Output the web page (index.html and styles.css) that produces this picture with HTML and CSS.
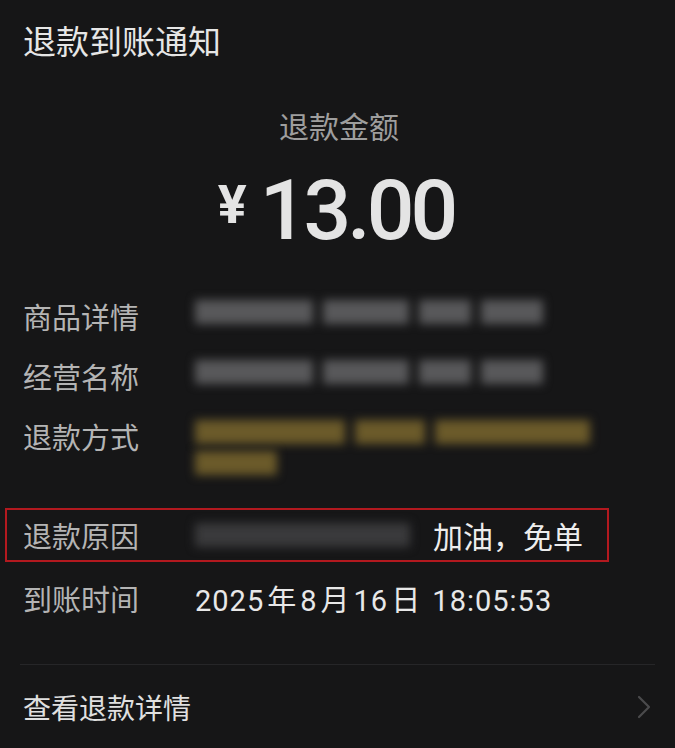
FILE: index.html
```html
<!DOCTYPE html>
<html lang="zh-CN">
<head>
  <meta charset="UTF-8" />
  <meta name="viewport" content="width=device-width, initial-scale=1.0"/>
  <title>退款到账通知</title>
  <link rel="stylesheet" href="styles.css">
</head>
<body>
  <div class="notice">
    <div class="title">退款到账通知</div>

    <div class="amount-label">退款金额</div>
    <div class="amount"><span class="currency">¥</span>13.00</div>

    <div class="rows">
      <div class="row">
        <div class="label">商品详情</div>
        <div class="value">
          <div class="blur-line">
            <span class="chunk" style="width: 118px"></span>
            <span class="chunk" style="width: 86px"></span>
            <span class="chunk" style="width: 52px"></span>
            <span class="chunk" style="width: 62px"></span>
          </div>
        </div>
      </div>

      <div class="row">
        <div class="label">经营名称</div>
        <div class="value">
          <div class="blur-line">
            <span class="chunk" style="width: 118px"></span>
            <span class="chunk" style="width: 86px"></span>
            <span class="chunk" style="width: 52px"></span>
            <span class="chunk" style="width: 62px"></span>
          </div>
        </div>
      </div>

      <div class="row row-tall">
        <div class="label">退款方式</div>
        <div class="value">
          <div class="blur-line gold">
            <span class="chunk" style="width: 150px"></span>
            <span class="chunk" style="width: 70px"></span>
            <span class="chunk" style="width: 155px"></span>
          </div>
          <div class="blur-line gold">
            <span class="chunk" style="width: 82px"></span>
          </div>
        </div>
      </div>

      <div class="row reason">
        <div class="label">退款原因</div>
        <div class="value reason-value">
          <div class="blur-line dim">
            <span class="chunk" style="width: 215px"></span>
          </div>
          <span class="reason-text">加油，免单</span>
        </div>
      </div>

      <div class="row">
        <div class="label">到账时间</div>
        <div class="value time">2025<span class="unit">年</span>8<span class="unit">月</span>16<span class="unit">日</span> 18:05:53</div>
      </div>
    </div>

    <div class="footer">
      <span>查看退款详情</span>
      <svg class="chevron" width="14" height="24" viewBox="0 0 14 24">
        <path d="M2 2 L12 12 L2 22" fill="none" stroke="#4a4a4c" stroke-width="2.2" stroke-linecap="round" stroke-linejoin="round"/>
      </svg>
    </div>
  </div>
</body>
</html>
```

FILE: styles.css
```css
body {
  margin: 0;
  background: #161617;
  color: #d8d8d8;
  font-family: "Noto Sans CJK SC", "Noto Sans", sans-serif;
}

.notice {
  padding: 20px 20px 0 23px;
}

.title {
  font-size: 33px;
  line-height: 40px;
  color: #e6e6e6;
}

.amount-label {
  margin-top: 45px;
  text-align: center;
  font-size: 30px;
  line-height: 40px;
  color: #9e9e9e;
}

.amount {
  margin-top: 15px;
  text-align: center;
  font-family: Roboto, "Noto Sans", sans-serif;
  font-size: 84px;
  line-height: 90px;
  font-weight: 500;
  letter-spacing: -4px;
  color: #e4e4e4;
  padding-right: 6px;
}

.currency {
  font-size: 54px;
  font-weight: 700;
  letter-spacing: 0;
  vertical-align: 16px;
  margin-right: 13px;
}

.rows {
  margin-top: 40px;
}

.row {
  display: flex;
  align-items: flex-start;
  min-height: 60px;
}

.row-tall {
  min-height: 74px;
}

.label {
  width: 172px;
  flex-shrink: 0;
  font-size: 29px;
  line-height: 40px;
  color: #b4b4b4;
}

.value {
  font-size: 29px;
  line-height: 40px;
  color: #e8e8e8;
}

.blur-line {
  display: flex;
  gap: 10px;
  height: 32px;
  align-items: center;
  filter: blur(5px);
}

.chunk {
  display: block;
  height: 24px;
  background: #58585a;
}

.gold .chunk {
  background: #6b5a2a;
}

.gold + .gold {
  height: 30px;
}

.dim .chunk {
  background: #3a3a3c;
}

.reason {
  margin: 18px 46px 16px -18px;
  padding: 5px 0 5px 16px;
  min-height: 0;
  border: 2px solid #b3191f;
  align-items: center;
}

.reason-value {
  display: flex;
  align-items: center;
  justify-content: space-between;
  flex: 1;
  padding-right: 24px;
}

.reason-text {
  font-size: 30px;
  color: #ededed;
}

.time {
  font-family: Roboto, "Noto Sans CJK SC", sans-serif;
  letter-spacing: 1px;
}

.unit {
  font-family: "Noto Sans CJK SC", sans-serif;
  margin: 0 3px;
}

.footer {
  margin: 26px 0 0 -3px;
  padding: 22px 0 0 3px;
  border-top: 1px solid #262628;
  display: flex;
  align-items: center;
  justify-content: space-between;
  font-size: 28px;
  line-height: 40px;
  color: #e0e0e0;
}

.chevron {
  margin-right: 4px;
}
```
